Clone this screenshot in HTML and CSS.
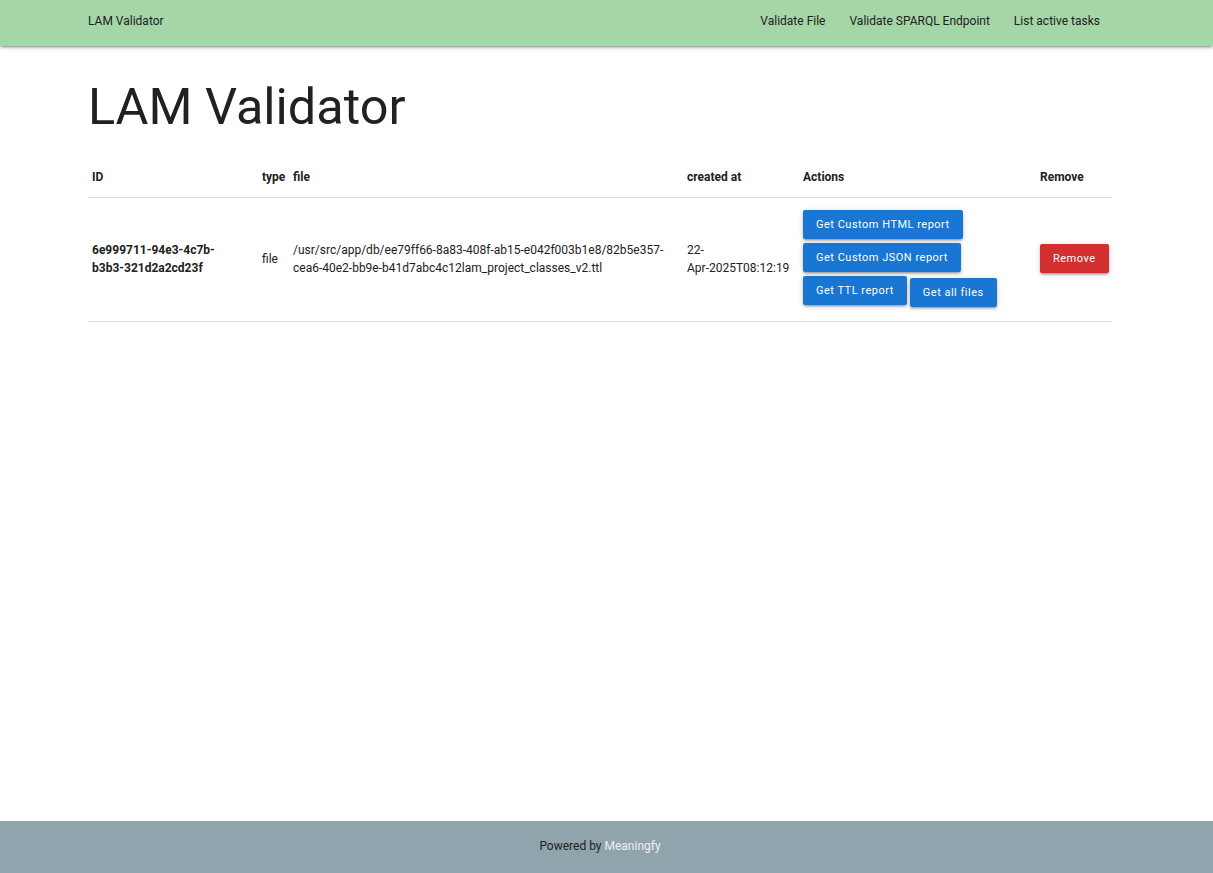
FILE: index.html
```html
<!DOCTYPE html>
<html lang="en">
<head>
<meta charset="utf-8">
<title>LAM Validator</title>
<link rel="stylesheet" href="styles.css">
</head>
<body>
<div class="page">
  <nav class="navbar">
    <div class="container nav-inner">
      <a class="brand" href="#">LAM Validator</a>
      <ul class="nav-links">
        <li><a href="#">Validate File</a></li>
        <li><a href="#">Validate SPARQL Endpoint</a></li>
        <li><a href="#">List active tasks</a></li>
      </ul>
    </div>
  </nav>
  <main class="container main">
    <h1 class="title">LAM Validator</h1>
    <table class="tasks">
      <colgroup>
        <col class="c-id"><col class="c-type"><col class="c-file"><col class="c-created"><col class="c-actions"><col class="c-remove">
      </colgroup>
      <thead>
        <tr>
          <th>ID</th>
          <th>type</th>
          <th>file</th>
          <th>created at</th>
          <th>Actions</th>
          <th>Remove</th>
        </tr>
      </thead>
      <tbody>
        <tr>
          <td class="id-cell">6e999711-94e3-4c7b-b3b3-321d2a2cd23f</td>
          <td>file</td>
          <td class="file-cell">/usr/src/app/db/ee79ff66-8a83-408f-ab15-e042f003b1e8/82b5e357-cea6-40e2-bb9e-b41d7abc4c12lam_project_classes_v2.ttl</td>
          <td class="created-cell">22-<br>Apr-2025T08:12:19</td>
          <td>
            <div class="actions">
              <a class="btn btn-blue" href="#">Get Custom HTML report</a>
              <a class="btn btn-blue" href="#">Get Custom JSON report</a>
              <a class="btn btn-blue" href="#">Get TTL report</a>
              <a class="btn btn-blue btn-low" href="#">Get all files</a>
            </div>
          </td>
          <td><a class="btn btn-red" href="#">Remove</a></td>
        </tr>
      </tbody>
    </table>
  </main>
  <footer class="footer">
    <div class="container footer-inner">Powered by <a class="footer-link" href="#">Meaningfy</a></div>
  </footer>
</div>
</body>
</html>
```
FILE: styles.css
```css
* { box-sizing: border-box; }
html, body { margin: 0; padding: 0; }
body {
  font-family: Roboto, "Noto Sans", "Liberation Sans", sans-serif;
  font-size: 12px;
  line-height: 1.5;
  color: #212121;
  background: #fff;
}
a { text-decoration: none; }
.page {
  min-height: 100vh;
  display: flex;
  flex-direction: column;
}
.container {
  width: 1024px;
  margin-left: 88px;
}
.navbar {
  height: 46px;
  background: #a5d6a7;
  box-shadow: 0 2px 2px 0 rgba(0,0,0,.14), 0 3px 1px -2px rgba(0,0,0,.12), 0 1px 5px 0 rgba(0,0,0,.2);
}
.nav-inner {
  height: 46px;
  padding-bottom: 5px;
  display: flex;
  align-items: center;
  justify-content: space-between;
}
.brand {
  color: #212121;
  font-size: 12px;
}
.nav-links {
  list-style: none;
  margin: 0;
  padding: 0;
  display: flex;
}
.nav-links a {
  display: block;
  padding: 0 12px;
  color: #212121;
  font-size: 12px;
}
.main { flex: 1; }
.title {
  font-size: 50.4px;
  font-weight: 400;
  line-height: 1.1;
  margin: 33px 0 17px;
  color: #212121;
}
.tasks {
  width: 1024px;
  border-collapse: collapse;
  table-layout: fixed;
}
.c-id { width: 170px; }
.c-type { width: 31px; }
.c-file { width: 394px; }
.c-created { width: 116px; }
.c-actions { width: 237px; }
.c-remove { width: 76px; }
.tasks thead tr { border-bottom: 1px solid #e0e0e0; }
.tasks tbody tr { border-bottom: 1px solid #e0e0e0; }
.tasks th {
  text-align: left;
  font-weight: 700;
  padding: 16px 4px 10px;
  line-height: 20px;
  vertical-align: middle;
}
.tasks td {
  padding: 12px 4px 14px;
  vertical-align: middle;
  overflow-wrap: break-word;
}
.tasks .id-cell {
  font-weight: 700;
  padding-right: 30px;
}
.actions {
  display: flex;
  flex-wrap: wrap;
  align-items: flex-start;
  gap: 4px 3px;
}
.btn {
  display: inline-block;
  height: 29px;
  line-height: 29px;
  padding: 0 13px;
  font-size: 11px;
  letter-spacing: .5px;
  color: #fff;
  border-radius: 2px;
  white-space: nowrap;
  box-shadow: 0 2px 2px 0 rgba(0,0,0,.14), 0 3px 1px -2px rgba(0,0,0,.12), 0 1px 5px 0 rgba(0,0,0,.2);
}
.btn-blue { background: #1976d2; }
.btn-red { background: #d32f2f; }
.btn-low { margin-top: 2px; }
.footer {
  height: 52px;
  background: #90a4ae;
}
.footer-inner {
  height: 52px;
  padding-bottom: 3px;
  display: flex;
  align-items: center;
  justify-content: center;
  color: #212121;
  white-space: pre;
}
.footer-link { color: #eceff1; }
```
